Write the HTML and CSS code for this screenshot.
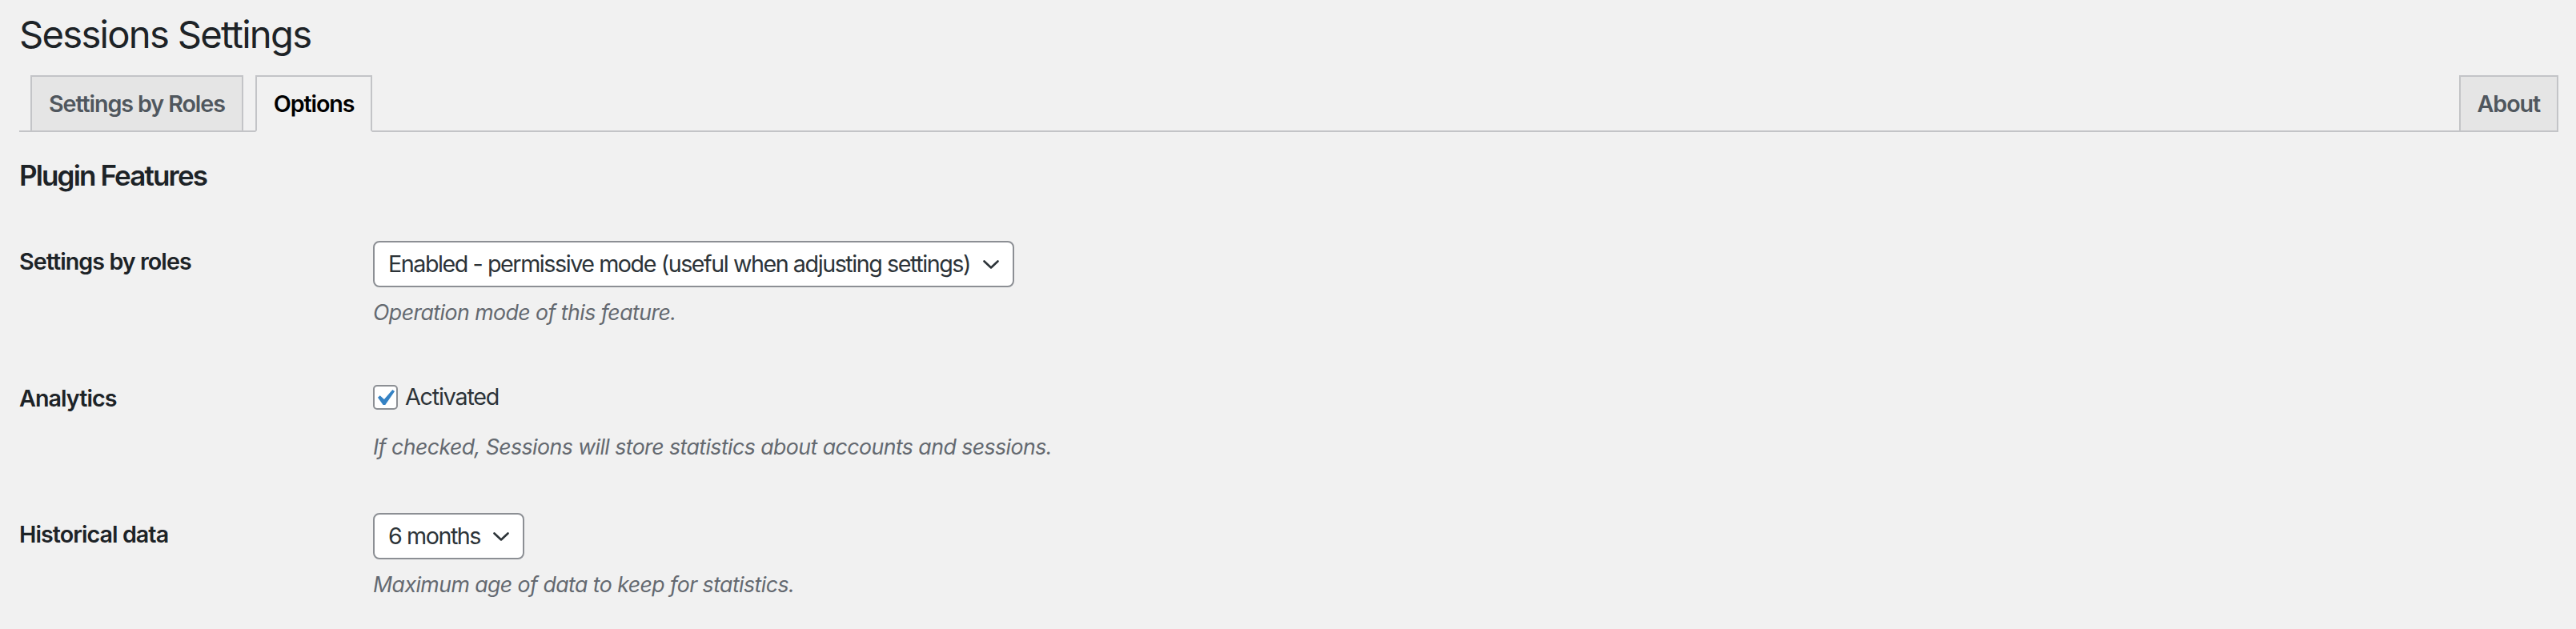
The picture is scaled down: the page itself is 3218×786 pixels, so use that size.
FILE: index.html
```html
<!DOCTYPE html>
<html lang="en">
<head>
<meta charset="utf-8">
<title>Sessions Settings</title>
<link rel="stylesheet" href="styles.css">
</head>
<body>
<div class="wrap">
  <h1 class="page-title">Sessions Settings</h1>
  <nav class="tabs">
    <a class="tab">Settings by Roles</a>
    <a class="tab tab-active">Options</a>
    <a class="tab tab-right">About</a>
  </nav>
  <h2 class="section-title">Plugin Features</h2>
  <div class="form">
    <div class="row">
      <div class="th">Settings by roles</div>
      <div class="td">
        <div class="select">
          <span class="select-text">Enabled - permissive mode (useful when adjusting settings)</span>
          <svg class="chevron" viewBox="0 0 20 11" width="20" height="11"><path d="M1.5 1.5 L10 9.5 L18.5 1.5" fill="none" stroke="#2c3338" stroke-width="2.6" stroke-linecap="round" stroke-linejoin="round"/></svg>
        </div>
        <p class="desc desc-select">Operation mode of this feature.</p>
      </div>
    </div>
    <div class="row">
      <div class="th">Analytics</div>
      <div class="td td-check">
        <label class="check-line">
          <span class="checkbox"><svg viewBox="3.81 2.86 13.33 13.33" width="27" height="27"><path d="M14.83 4.89l1.34.94-5.81 8.38H9.02L5.78 9.67l1.34-1.25 2.57 2.4z" fill="#3582c4"/></svg></span>
          <span class="check-label">Activated</span>
        </label>
        <p class="desc desc-check">If checked, Sessions will store statistics about accounts and sessions.</p>
      </div>
    </div>
    <div class="row">
      <div class="th">Historical data</div>
      <div class="td td-last">
        <div class="select">
          <span class="select-text">6 months</span>
          <svg class="chevron" viewBox="0 0 20 11" width="20" height="11"><path d="M1.5 1.5 L10 9.5 L18.5 1.5" fill="none" stroke="#2c3338" stroke-width="2.6" stroke-linecap="round" stroke-linejoin="round"/></svg>
        </div>
        <p class="desc desc-select">Maximum age of data to keep for statistics.</p>
      </div>
    </div>
  </div>
</div>
</body>
</html>
```
FILE: styles.css
```css
html, body {
  margin: 0;
  padding: 0;
  background: #f1f1f1;
}
body {
  font-family: Inter, "Noto Sans", sans-serif;
  color: #1d2327;
}
.wrap {
  padding: 0 22px 0 24px;
}
.page-title {
  margin: 0;
  padding: 12px 0 0;
  font-size: 47.2px;
  font-weight: 400;
  letter-spacing: -1.75px;
  line-height: 62px;
  color: #1d2327;
}
.tabs {
  display: flex;
  margin-top: 20px;
  border-bottom: 2px solid #c3c4c7;
  height: 69px;
}
.tab {
  box-sizing: border-box;
  height: 71px;
  margin-left: 14px;
  padding: 0 21px;
  border: 2px solid #c3c4c7;
  background: #e5e5e5;
  color: #50575e;
  font-size: 28.7px;
  font-weight: 600;
  letter-spacing: -1.1px;
  line-height: 67px;
  white-space: nowrap;
}
.tab + .tab {
  margin-left: 15px;
}
.tab-active {
  background: #f1f1f1;
  border-bottom-color: #f1f1f1;
  color: #000;
}
.tabs .tab-right {
  margin-left: auto;
}
.section-title {
  margin: 29px 0 23px;
  font-size: 35px;
  font-weight: 600;
  letter-spacing: -1.85px;
  line-height: 50px;
  color: #1d2327;
}
.row {
  display: grid;
  grid-template-columns: 442px 1fr;
}
.th {
  padding-top: 41px;
  font-size: 28.7px;
  font-weight: 600;
  letter-spacing: -0.95px;
  line-height: 37px;
  color: #1d2327;
}
.td {
  padding: 34px 0 28px;
}
.td-check {
  padding: 41px 0 30px;
}
.td-last {
  padding: 33px 0 20px;
}
.select {
  box-sizing: border-box;
  display: inline-flex;
  align-items: center;
  height: 58px;
  padding: 0 17px;
  gap: 16px;
  background: #fff;
  border: 2px solid #8c8f94;
  border-radius: 8px;
  color: #2c3338;
  font-size: 28.7px;
  letter-spacing: -1.45px;
  line-height: 40px;
}
.chevron {
  display: block;
  flex: none;
}
.desc {
  margin: 0;
  font-size: 26.7px;
  font-style: italic;
  letter-spacing: -0.55px;
  line-height: 40px;
  color: #646970;
}
.desc-select {
  margin-top: 11px;
}
.desc-check {
  margin-top: 25px;
}
.check-line {
  display: flex;
  align-items: center;
  height: 34px;
  gap: 9px;
  font-size: 28.7px;
  letter-spacing: -1.2px;
  line-height: 34px;
  color: #2c3338;
}
.checkbox {
  box-sizing: border-box;
  width: 31px;
  height: 31px;
  border: 2px solid #8c8f94;
  border-radius: 5px;
  background: #fff;
  flex: none;
}
.checkbox svg {
  display: block;
}
```
